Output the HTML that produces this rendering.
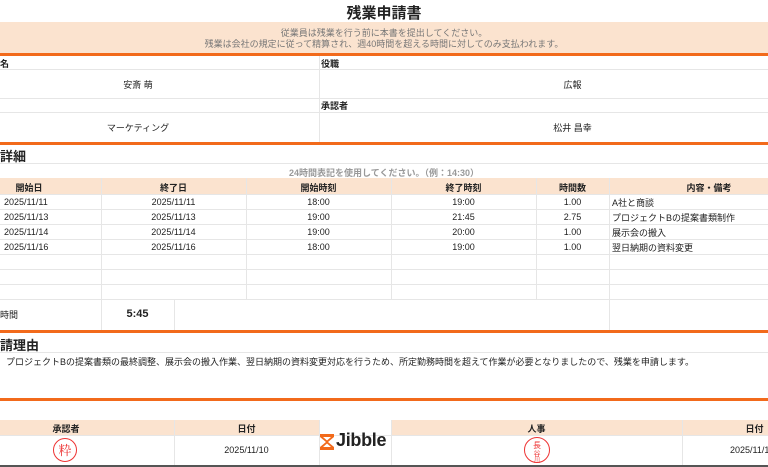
<!DOCTYPE html>
<html><head><meta charset="utf-8"><style>
*{margin:0;padding:0;box-sizing:border-box}
body{width:768px;height:467px;overflow:hidden;background:#fff;font-family:"Liberation Sans","Noto Sans CJK JP",sans-serif;color:#222;position:relative}
.a{position:absolute}
.c{text-align:center}
.peach{background:#fbe3cf}
.or{position:absolute;left:0;width:768px;height:3px;background:#f26a1b}
.t{font-size:9px;position:absolute;white-space:nowrap}
.b{font-weight:bold}
.hl{position:absolute;left:0;width:768px;height:1px;background:#e6e6e6}
.vl{position:absolute;width:1px;background:#e6e6e6}
</style></head><body>
<div class="a c b" style="left:0;width:768px;top:2px;font-size:15px;">残業申請書</div>
<div class="a peach" style="left:0;top:22px;width:768px;height:31px"></div>
<div class="t c" style="left:0;width:768px;top:26px;color:#777">従業員は残業を行う前に本書を提出してください。</div>
<div class="t c" style="left:0;width:768px;top:37px;color:#777">残業は会社の規定に従って精算され、週40時間を超える時間に対してのみ支払われます。</div>
<div class="or" style="top:53px"></div>
<div class="t b" style="left:0;top:57px">名</div>
<div class="t b" style="left:321px;top:57px">役職</div>
<div class="hl" style="top:69px"></div>
<div class="t c" style="left:0;width:276px;top:78px">安斎 萌</div>
<div class="t c" style="left:320px;width:505px;top:78px">広報</div>
<div class="hl" style="top:98px"></div>
<div class="t b" style="left:321px;top:99px">承認者</div>
<div class="hl" style="top:112px"></div>
<div class="t c" style="left:0;width:276px;top:121px">マーケティング</div>
<div class="t c" style="left:320px;width:505px;top:121px">松井 昌幸</div>
<div class="vl" style="left:319px;top:56px;height:86px"></div>
<div class="or" style="top:142px"></div>
<div class="a b" style="left:0;top:146px;font-size:13px">詳細</div>
<div class="hl" style="top:163px"></div>
<div class="t c b" style="left:0;width:768px;top:166px;color:#999">24時間表記を使用してください。（例：14:30）</div>
<div class="a peach" style="left:0;top:178px;width:768px;height:16px"></div>
<div class="t b c" style="left:-43px;width:144px;top:181px">開始日</div>
<div class="t b c" style="left:101px;width:145px;top:181px">終了日</div>
<div class="t b c" style="left:246px;width:145px;top:181px">開始時刻</div>
<div class="t b c" style="left:391px;width:145px;top:181px">終了時刻</div>
<div class="t b c" style="left:536px;width:73px;top:181px">時間数</div>
<div class="t b c" style="left:609px;width:200px;top:181px">内容・備考</div>
<div class="hl" style="top:194px"></div><div class="hl" style="top:209px"></div><div class="hl" style="top:224px"></div><div class="hl" style="top:239px"></div><div class="hl" style="top:254px"></div><div class="hl" style="top:269px"></div><div class="hl" style="top:284px"></div><div class="hl" style="top:299px"></div>
<div class="vl" style="left:101px;top:178px;height:121px"></div>
<div class="vl" style="left:246px;top:178px;height:121px"></div>
<div class="vl" style="left:391px;top:178px;height:121px"></div>
<div class="vl" style="left:536px;top:178px;height:121px"></div>
<div class="vl" style="left:609px;top:178px;height:152px"></div>
<div class="vl" style="left:101px;top:299px;height:31px"></div>
<div class="vl" style="left:174px;top:299px;height:31px"></div>
<div class="t" style="left:4px;top:197px">2025/11/11</div><div class="t c" style="left:101px;width:145px;top:197px">2025/11/11</div><div class="t c" style="left:246px;width:145px;top:197px">18:00</div><div class="t c" style="left:391px;width:145px;top:197px">19:00</div><div class="t c" style="left:536px;width:73px;top:197px">1.00</div><div class="t" style="left:612px;top:196px">A社と商談</div>
<div class="t" style="left:4px;top:212px">2025/11/13</div><div class="t c" style="left:101px;width:145px;top:212px">2025/11/13</div><div class="t c" style="left:246px;width:145px;top:212px">19:00</div><div class="t c" style="left:391px;width:145px;top:212px">21:45</div><div class="t c" style="left:536px;width:73px;top:212px">2.75</div><div class="t" style="left:612px;top:211px">プロジェクトBの提案書類制作</div>
<div class="t" style="left:4px;top:227px">2025/11/14</div><div class="t c" style="left:101px;width:145px;top:227px">2025/11/14</div><div class="t c" style="left:246px;width:145px;top:227px">19:00</div><div class="t c" style="left:391px;width:145px;top:227px">20:00</div><div class="t c" style="left:536px;width:73px;top:227px">1.00</div><div class="t" style="left:612px;top:226px">展示会の搬入</div>
<div class="t" style="left:4px;top:242px">2025/11/16</div><div class="t c" style="left:101px;width:145px;top:242px">2025/11/16</div><div class="t c" style="left:246px;width:145px;top:242px">18:00</div><div class="t c" style="left:391px;width:145px;top:242px">19:00</div><div class="t c" style="left:536px;width:73px;top:242px">1.00</div><div class="t" style="left:612px;top:241px">翌日納期の資料変更</div>
<div class="t" style="left:0;top:308px">時間</div>
<div class="a b c" style="left:101px;width:73px;top:308px;font-size:11px">5:45</div>
<div class="or" style="top:330px"></div>
<div class="a b" style="left:0;top:335px;font-size:13px">請理由</div>
<div class="hl" style="top:352px"></div>
<div class="t" style="left:6px;top:355px">プロジェクトBの提案書類の最終調整、展示会の搬入作業、翌日納期の資料変更対応を行うため、所定勤務時間を超えて作業が必要となりましたので、残業を申請します。</div>
<div class="or" style="top:398px"></div>
<div class="a peach" style="left:0;top:420px;width:319px;height:15px"></div>
<div class="a peach" style="left:391px;top:420px;width:377px;height:15px"></div>
<div class="hl" style="top:435px"></div>
<div class="t b c" style="left:0;width:132px;top:422px">承認者</div>
<div class="t b c" style="left:174px;width:145px;top:422px">日付</div>
<div class="t b c" style="left:391px;width:291px;top:422px">人事</div>
<div class="t b c" style="left:682px;width:145px;top:422px">日付</div>
<div class="vl" style="left:174px;top:420px;height:45px"></div>
<div class="vl" style="left:319px;top:420px;height:45px"></div>
<div class="vl" style="left:391px;top:420px;height:45px"></div>
<div class="vl" style="left:682px;top:420px;height:45px"></div>
<div class="t c" style="left:174px;width:145px;top:445px">2025/11/10</div>
<div class="t" style="left:730px;top:445px">2025/11/10</div>
<svg class="a" style="left:52px;top:437px" width="26" height="26"><circle cx="13" cy="13" r="11.5" fill="none" stroke="#e33" stroke-width="1"/><text x="13" y="18" font-size="13" fill="#e33" text-anchor="middle" font-family="Noto Serif CJK SC,serif">粋</text></svg>
<svg class="a" style="left:523px;top:436px" width="28" height="28"><circle cx="14" cy="14" r="12.5" fill="none" stroke="#e33" stroke-width="1"/><text x="14" y="12" font-size="8" fill="#e33" text-anchor="middle">長</text><text x="14" y="20" font-size="7" fill="#e33" text-anchor="middle">谷</text><text x="14" y="26" font-size="6" fill="#e33" text-anchor="middle">川</text></svg>
<svg class="a" style="left:320px;top:434px" width="14" height="16" viewBox="0 0 14 16"><path d="M0 0H14V3L8 8L14 13V16H0V13L6 8L0 3Z M3 3L7 6.5L11 3Z M3 13L7 9.5L11 13Z" fill="#f26a1b" fill-rule="evenodd"/></svg>
<div class="a b" style="left:336px;top:430px;font-size:18px;color:#222;letter-spacing:-0.3px">Jibble</div>
<div class="a" style="left:0;top:465px;width:768px;height:2px;background:#555"></div>
</body></html>
